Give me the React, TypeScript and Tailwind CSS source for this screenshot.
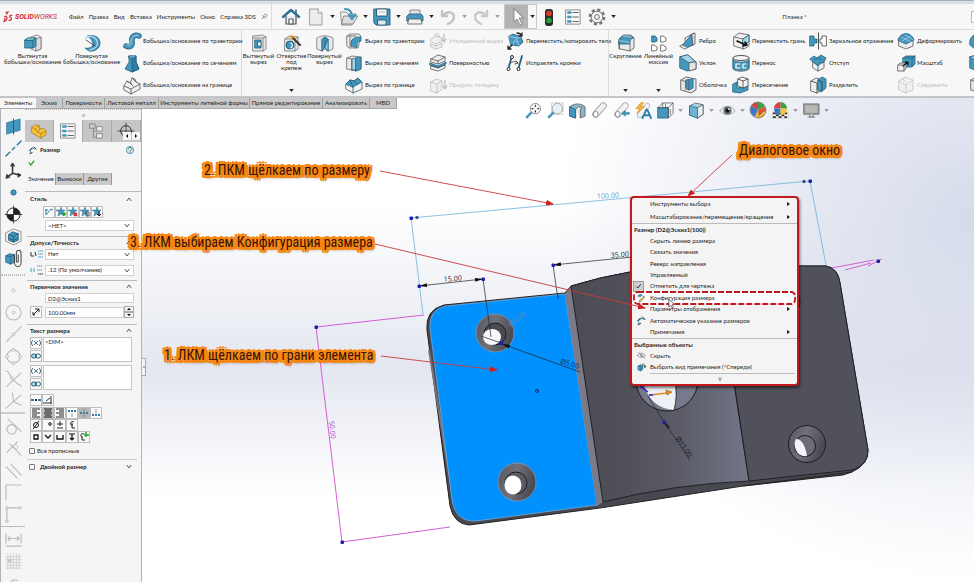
import React from 'react';

const B = '#4598bd';
const L = '#a9d5e8';
const D = '#35444e';
const G = '#dcdcdc';

const p = (d: string, fill = 'none', stroke = D, w = 0.8) => (
    <path d={d} fill={fill} stroke={stroke} strokeWidth={w} strokeLinejoin="round" strokeLinecap="round" />
);

const icons: Record<string, React.ReactNode> = {
    extrude: <>{p('M7 3l6-2 4 2v12l-5 2-5-2z', '#f4f4f4', '#777')}{p('M12 5l5-2v12l-5 2z', G, '#777')}{p('M1 6l3-2h8v8l-3 2H1z', B, '#1f5f80')}{p('M1 6h8v8M9 6l3-2', 'none', '#1f5f80')}{p('M1 6l3-2h8L9 6z', L, '#1f5f80')}</>,
    revolve: <>{p('M5 2c7-2 12 2 12 7s-5 9-11 8l-4-3c4 1 8-1 8-4S8 5 5 2z', B, '#1f5f80')}{p('M3 4c3-3 9-2 11 3s-3 8-7 9', 'none', L, 1.4)}{p('M3 6l9 6', 'none', '#333')}</>,
    sweep: <>{p('M3 14c5 2 7-1 6-5s3-7 7-5', 'none', '#1f5f80', 5.4)}{p('M3 14c5 2 7-1 6-5s3-7 7-5', 'none', B, 4)}{p('M4 13c4 1 4-1 4-4s3-6 7-6', 'none', L, 1)}</>,
    loft: <>{p('M6 2h7v6l3 7-7 3-7-3 4-7z', B, '#1f5f80')}{p('M6 2h7l-2 2H7z', L, '#1f5f80')}{p('M9 4v14l7-3-3-7V2', '#2e7da3', '#1f5f80')}</>,
    boundary: <>{p('M1 10l3-5 3 2 2-5 3 1 1 3 4 2v5l-9 5-7-4z', '#efefef', '#555')}{p('M1 10l7 3 9-5M8 13v5M4 5l5 3M9 2l3 3 1 1M7 7l3 3', 'none', '#555')}</>,
    cut: <>{p('M3 2l10-1 3 2v12l-3 2H3z', '#e9e9e9', '#777')}{p('M3 4h10v13M13 4l3-1', 'none', '#777')}{p('M5 6h6v8H5z', B, '#1f5f80')}{p('M8 8h3v4H8z', '#fff', '#1f5f80')}</>,
    hole: <>{p('M2 5l4-3 9 1v12l-3 2H2z', '#e9e9e9', '#777')}{p('M2 5h10v12M12 5l3-2', 'none', '#777')}<circle cx="7" cy="11" r="4" fill={B} stroke="#1f5f80" />{p('M8 9a3 3 0 0 1 0 5', 'none', '#fff', 1.2)}{p('M9 3l8 8', 'none', '#333', 2)}{p('M9 1v5M6 3h6', 'none', '#f0a020', 1.2)}</>,
    revcut: <>{p('M1 4c4-3 11-3 16 0v11l-5 2-3-2-3 2-5-2z', '#e9e9e9', '#777')}{p('M6 5l3-2 3 2v12l-3-4-3 4z', B, '#1f5f80')}{p('M9 3v10', 'none', '#1f5f80')}{p('M9 13l3-8v12z', L, '#1f5f80')}</>,
    sweepcut: <>{p('M2 4l3-2h9l2 2-3 12H4l-2-2z', '#e9e9e9', '#666')}{p('M6 14c-1-7 3-9 10-9v4c-4 0-4 2-4 6z', B, '#1f5f80')}{p('M2 4h9M5 4v11', 'none', '#666')}</>,
    loftcut: <>{p('M2 4l5-2 9 1v12l-5 2-9-2z', '#e9e9e9', '#666')}{p('M7 5l4-1v12H7z', L, '#1f5f80')}{p('M11 4l5-1v12l-5 2z', B, '#1f5f80')}{p('M2 4l5 1v11', 'none', '#666')}</>,
    boundcut: <>{p('M1 8l4-4 4 1 4-3 4 4v7l-9 4-7-4z', '#f3f3f3', '#555')}{p('M1 8l4-4 4 1 4-3 4 4-9 5z', B, '#1f5f80')}{p('M5 4l3 7M9 5l3 3M8 11v6', 'none', '#1f5f80')}</>,
    thick: <>{p('M2 7l5-3 6 2v3l-6 3-5-2zM2 12l5 2 6-3v4l-6 2-5-2zM7 12v2M5 4c1-4 6-3 5 1', '#efefef', '#bbb')}{p('M15 2v7M13 7l2 3 2-3', 'none', '#bbb', 1.2)}</>,
    surfcut: <>{p('M2 5l7-4 7 2v4L9 10 2 8z', '#eee', '#555')}{p('M1 9l8 3 8-4v2l-8 4-8-3z', B, '#1f5f80')}{p('M2 12l7 2 7-3v3l-7 3-7-2zM2 5l7 2 7-4M9 7v3', 'none', '#555')}</>,
    thicken: <>{p('M2 6l5-3 6 2v8l-5 4-6-2zM2 6l6 2 5-3M8 8v9', '#efefef', '#bbb')}{p('M16 4v8M14 10l2 3 2-3', 'none', '#bbb', 1.2)}</>,
    move: <>{p('M3 4l4-2 8 3 2 5-4 4-8-1z', B, '#1f5f80')}{p('M3 4l7 2 5-1M10 6l3 8M7 13l1-4 4 1', 'none', L)}{p('M2 17l4-4M2 14v3h3M11 1c3 0 4 1 5 3M16 1v3h-3', 'none', '#222', 1.3)}</>,
    heal: <>{p('M6 2L2 16M16 2l-4 14', 'none', B, 2)}{p('M6 2L2 16M16 2l-4 14M5 9c2-2 5-2 7 0M10 7l2 2-3 1', 'none', '#333', 0.8)}<circle cx="6" cy="3" r="1.5" fill="#fff" stroke="#333" /><circle cx="2.500" cy="15" r="1.500" fill="#fff" stroke="#333" /><circle cx="12.500" cy="15" r="1.500" fill="#fff" stroke="#333" /></>,
    fillet: <>{p('M2 5l4-4h8l3 3v10l-4 3-10-2z', '#eaeaea', '#555')}{p('M2 7l3-5h8l4 2c-3 0-4 2-4 6H2z', B, '#1f5f80')}{p('M2 7c5 0 6 0 11 2M5 2l9 1', 'none', L)}{p('M13 10v7M2 7v8', 'none', '#555')}</>,
    pattern: <>{p('M2 2h3l2 2v3L5 8H2z', B, '#1f5f80')}{p('M11 2h2l3 2v3l-3 1h-2zM2 11h2l3 2v3l-3 1H2zM11 11h2l3 2v3l-3 1h-2z', '#fff', '#555')}</>,
    rib: <>{p('M1 14l5-3V6l9-5v11l-9 5z', '#e6e6e6', '#555')}{p('M4 13L13 2l1 11-5 2z', B, '#1f5f80')}{p('M13 2l3-1v11l-2 1z', '#ddd', '#555')}</>,
    draft: <>{p('M1 3l8-2 8 7v7l-9 2-7-3z', B, '#1f5f80')}{p('M1 3l9 6 7-1L9 1z', L, '#1f5f80')}{p('M10 9v8l7-2V8z', '#e5e5e5', '#555')}</>,
    shell: <>{p('M2 4l5-3 10 2v11l-5 3-10-3z', '#e3e3e3', '#555')}{p('M7 4l7-1v9l-4 2-3-2z', B, '#1f5f80')}{p('M2 4l5 2v8M10 5v9', 'none', '#555')}</>,
    moveface: <>{p('M2 5l5-4 10 2v11l-5 3-10-3z', '#f0f0f0', '#555')}{p('M2 5l9 2 6-4M11 7v10', 'none', '#555')}{p('M11 7l6-4v7l-6 3z', L, '#1f5f80')}{p('M5 9l9 4M11 14l4-1-2-3', 'none', '#111', 1.6)}</>,
    wrap: <>{p('M1 4v11c3 3 13 3 16 0V4', '#eaeaea', '#555')}{p('M1 6v8c3 3 13 3 16 0V6c-4 3-12 3-16 0z', B, '#1f5f80')}<ellipse cx="9" cy="4" rx="8" ry="2.500" fill="#f6f6f6" stroke="#555" />{p('M8 10H4v4h4M14 10h-3v4h3', 'none', '#fff', 1.2)}</>,
    intersect: <>{p('M1 8l4-2v6l7-1 4-2v5l-8 3-7-1z', B, '#1f5f80')}{p('M6 3l4-2 6 2v7l-5 2-5-2zM6 3l5 2 5-2M11 5v7', '#f4f4f4', '#444')}</>,
    mirror: <>{p('M1 4h4v3h3v4H5v3H1z', B, '#1f5f80')}{p('M17 4h-4v3h-2v4h2v3h4z', '#fff', '#444')}{p('M9.500 1v16', 'none', '#222')}</>,
    offset: <>{p('M4 8l5 3 6-3v6l-6 3-5-3z', '#f1f1f1', '#555')}{p('M1 5l4-3 3 2 4-3 5 3-2 4-4 1-2 3-5-4z', B, '#1f5f80')}{p('M5 6l4-2 4 2M9 11v6', 'none', '#1f5f80')}</>,
    split: <>{p('M2 5l5-3 4 1v12l-3 2-6-2z', '#eee', '#555')}{p('M9 4l4-3 4 2v9l-5 4-3-2z', B, '#1f5f80')}{p('M2 5l6 2v10M9 4l4 2v9', 'none', '#333')}</>,
    deform: <>{p('M2 8l7 3 7-3v6l-7 3-7-3z', '#eee', '#555')}{p('M1 8c2-8 13-9 16 0l-8 4z', B, '#1f5f80')}{p('M4 5l10 5M8 3l8 5M14 4L5 9M9 12v5', 'none', L, 0.7)}</>,
    scale: <>{p('M6 4l3-2h9v8l-3 3H6z', B, '#1f5f80')}{p('M6 4h9v8M15 4l3-2', 'none', '#1f5f80')}{p('M1 11l2-2h6v5l-2 3H1zM1 11h6v6M7 11l2-2', '#eee', '#555')}{p('M6 12l5-4M8 8h3v3', 'none', '#111', 1.2)}</>,
    combine: <>{p('M2 5l6-4 8 3v10l-7 3-7-3zM2 5l7 4 7-5M9 9v8M5 3l5 4', '#efefef', '#c4c4c4')}</>,
    extra: <>{p('M1 8c2-6 8-8 14-4v9l-9 4-5-4z', B, '#1f5f80')}</>,
    // quick access
    home: <>{p('M4 8v8h10V8', '#eee', '#555', 1.2)}{p('M7 16v-5h4v5z', '#fff', '#555', 1.2)}{p('M1 9l8-7 8 7', 'none', '#2f6f90', 2.4)}{p('M14 5V2', 'none', '#2f6f90', 1.6)}</>,
    page: <>{p('M3 1h8l4 4v12H3z', '#ececec', '#8a8a8a')}{p('M11 1v4h4', '#fff', '#8a8a8a')}</>,
    open: <>{p('M1 4h5l2 2h8v3l-4 8H2z', '#f1f1f1', '#777')}{p('M4 8h14l-5 8H2z', '#dedede', '#777')}{p('M5 1c5 0 7 3 7 8M9 7l3 4 3-4', 'none', B, 2.2)}</>,
    save: <>{p('M1 1h16v16H3l-2-2z', B, '#1f4f68')}{p('M4 1h10v7H4z', '#f6f6f6', '#1f4f68')}{p('M5 12h8v5H5z', '#dfe9ee', '#1f4f68')}{p('M6 4h6', 'none', '#aaa')}</>,
    print: <>{p('M4 7V2h10v5', '#e2e2e2', '#777')}{p('M1 8l2-2h12l2 2v5H1z', B, '#2a5a72')}{p('M3 11h12l1 5H2z', '#f0f0f0', '#555')}</>,
    undo: <>{p('M3 3v5h5', 'none', '#c3c3c3', 2.4)}{p('M4 7c7-6 13-1 10 5-1 2-3 3-5 4', 'none', '#c3c3c3', 2.4)}</>,
    redo: <>{p('M15 3v5h-5', 'none', '#c9c9c9', 2.4)}{p('M14 7C7 1 1 6 4 12c1 2 3 3 5 4', 'none', '#c9c9c9', 2.4)}</>,
    cursor: <>{p('M6 1v13l3-3 3 6 2-1-3-6h4z', '#fff', '#777')}</>,
    light: <><rect x="5" y="1" width="8" height="17" rx="3" fill="#2a2a2a" /><circle cx="9" cy="5.500" r="2.800" fill="#e03a24" /><circle cx="9" cy="12.500" r="2.800" fill="#25a23a" /></>,
    list: <>{p('M1 1h16v16H1z', '#f7f7f7', '#6a6a6a')}{p('M3 3h4v2H3zM3 8h4v2H3zM3 13h4v2H3z', B, B, 0.8)}{p('M9 4h6M9 9h6M9 14h6', 'none', '#666', 1.2)}</>,
    gear: <><circle cx="9" cy="9" r="7.200" fill="none" stroke="#777" strokeWidth="2.400" strokeDasharray="3.200 2.450" /><circle cx="9" cy="9" r="5.800" fill="#f5f5f5" stroke="#777" /><circle cx="9" cy="9" r="2.400" fill="none" stroke="#777" /></>,
    // heads-up
    zoomfit: <>{p('M2 16l5-5', 'none', B, 2.6)}<circle cx="11" cy="7" r="5.500" fill="#f4f8fa" stroke="#888" />{p('M11 3.500v1M11 9.500v1M7.500 7h1M13.500 7h1', 'none', '#333', 1.4)}</>,
    zoomarea: <>{p('M2 16l5-5', 'none', B, 2.6)}<circle cx="11" cy="7" r="5.500" fill="#e8f0f4" stroke="#aaa" /><path d="M5 1h12v12H5z" fill="none" stroke="#888" strokeWidth="0.700" strokeDasharray="1.500 1" /></>,
    section: <>{p('M1 5c4-4 12-4 16 0v10l-5 2V8H7v9l-6-2z', '#8fb6c8', '#555')}{p('M7 8l3-3 4 1-2 2v8', '#e8eef1', '#555')}{p('M1 5l6 3v9l-6-2z', B, '#1f5f80')}</>,
    tube: <>{p('M5 13L13 4', 'none', '#888', 7)}{p('M5 13L13 4', 'none', '#f0f0f0', 5.6)}<ellipse cx="5" cy="13" rx="2.600" ry="3.200" fill="#fff" stroke="#888" /></>,
    tubeback: <>{p('M5 13L13 4', 'none', '#999', 7)}{p('M5 13L13 4', 'none', '#f2f2f2', 5.600)}<ellipse cx="5" cy="13" rx="2.600" ry="3" fill="#fff" stroke="#888" />{p('M17 13h-4v2l-4-3 4-3v2h4z', B, '#1f5f80', 0.5)}</>,
    bolt: <>{p('M5 14l8-10', 'none', '#aaa', 6)}{p('M5 14l8-10', 'none', '#f2f2f2', 4.600)}{p('M6 1L1 7h4l-3 5 8-7H6l3-4z', '#f6b73c', '#c87d10', 0.6)}{p('M8 17l4-9h1l4 9M10 14h6', 'none', '#2f7fa6', 2)}</>,
    views: <>{p('M1 6h11v11H1z', B, '#1f5f80')}{p('M1 6l5-5h11v11l-5 5V6zM12 6l5-5M6 1v4M9 2v5M14 8v5', 'none', '#555')}</>,
    cube: <>{p('M2 4l6-3 8 2v10l-6 4-8-3z', L, '#555')}{p('M10 6l6-3v10l-6 4z', '#e5edf1', '#555')}{p('M2 4l8 2v11l-8-3z', '#6cb4d4', '#2a6f90')}</>,
    eye: <>{p('M1 9c4-6 12-6 16 0-4 6-12 6-16 0z', '#ececec', '#999')}<circle cx="9" cy="9" r="4.200" fill="#5c6a72" /><circle cx="9" cy="9" r="2" fill="#111" /><circle cx="10.500" cy="7.500" r="1" fill="#fff" /></>,
    ball: <><path d="M9 9V1a8 8 0 0 1 7 5z" fill="#3aa04a" /><path d="M9 9L2 5a8 8 0 0 1 7-4z" fill="#d9453c" /><path d="M9 9L2 5a8 8 0 0 0 4 11z" fill="#3b78c4" /><path d="M9 9l7-3a8 8 0 0 1-5 11l-5-1z" fill="#e8b93a" /><path d="M9 9l1 8a8 8 0 0 0 6-11z" fill="#d9533c" /><circle cx="9" cy="9" r="8" fill="none" stroke="#666" strokeWidth="0.600" />{p('M9 16l6-6 2 2-6 5z', '#f3c04d', '#8a6a20', 0.5)}</>,
    scene: <>{p('M1 11h16v6H1z', '#fff', '#999', 0.4)}<path d="M1 11h3v2H1zM7 11h3v2H7zM13 11h3v2h-3zM4 13h3v2H4zM10 13h3v2h-3zM1 15h3v2H1zM7 15h3v2H7zM13 15h3v2h-3z" fill="#333" /><path d="M9 7V0a7 7 0 0 1 7 7z" fill="#3aa04a" /><path d="M9 7H2a7 7 0 0 1 7-7z" fill="#d9453c" /><path d="M9 7H2a7 7 0 0 0 7 7z" fill="#3b78c4" /><path d="M9 7h7a7 7 0 0 1-7 7z" fill="#efc53a" /></>,
    monitor: <>{p('M1 2h16v11H1z', '#9a9a9a', '#666')}{p('M3 4h12v7H3z', '#b9b9b9', '#b9b9b9')}{p('M7 13v3h4v-3M5 16h8', '#ccc', '#777')}</>,
    // left sketch toolbar
    plane: <>{p('M2 5l14-4v12L2 17z', B, '#2a7aa0')}{p('M9 1v16', 'none', '#1f5f80', 1)}</>,
    axis: <>{p('M1 17L17 1', 'none', '#2f6f90', 1.400)}{p('M6 12l1-1M11 7l1-1', 'none', '#f5f5f5', 2)}</>,
    coord: <>{p('M8 2v10l8 2M8 12l-6 4', 'none', '#333', 1.600)}{p('M6 4l2-3 2 3zM14 12l3 2-3 2zM1 17l1-4 3 3z', '#333', '#333', 0.8)}</>,
    point: <circle cx="9" cy="9" r="2.800" fill={B} stroke="#2f6f90" />,
    mass: <><circle cx="9" cy="9" r="7" fill="#fff" stroke="#222" /><path d="M9 9V2a7 7 0 0 1 7 7zM9 9v7a7 7 0 0 1-7-7z" fill="#222" />{p('M9 0v18M0 9h18', 'none', '#222')}</>,
    bbox: <>{p('M1 5l8-4 8 3v10l-8 4-8-4z', '#f2f2f2', '#666', 0.7)}{p('M4 7l4-3 6 2v7l-5 2-5-2z', B, '#1f4f68')}{p('M4 7l5 2 5-3M9 9v6M4 11l5 2 5-2', 'none', '#1f4f68')}</>,
    mate: <>{p('M1 6l4-2 5 1v8l-4 2-5-2z', B, '#1f5f80')}{p('M1 6l5 1 4-2M6 7v8', 'none', '#1f5f80')}{p('M10 5v8a3 4 0 0 0 7 0V4a2 3 0 0 0-5 0v8a1 1 0 0 0 2 0V5', 'none', '#444', 1.1)}</>,
    dot: <circle cx="9" cy="9" r="1.800" fill="none" stroke="#bbb" />,
    circle: <><circle cx="9" cy="9" r="8" fill="none" stroke="#bbb" strokeWidth="1.200" /><circle cx="9" cy="9" r="1.500" fill="none" stroke="#bbb" /></>,
    line: <>{p('M1 17L17 1', 'none', '#bbb', 1.200)}<circle cx="9" cy="9" r="1.500" fill="#eee" stroke="#bbb" /></>,
    quad: <><circle cx="9" cy="9" r="7" fill="none" stroke="#bbb" strokeWidth="1.200" /><circle cx="9" cy="2" r="1.600" fill="#f5f5f5" stroke="#bbb" /><circle cx="9" cy="16" r="1.600" fill="#f5f5f5" stroke="#bbb" /><circle cx="2" cy="9" r="1.600" fill="#f5f5f5" stroke="#bbb" /><circle cx="16" cy="9" r="1.600" fill="#f5f5f5" stroke="#bbb" /></>,
    cross: <>{p('M1 1c2 0 3 1 4 4 2 5 6 8 12 12M17 3L2 17', 'none', '#bbb', 1.200)}<circle cx="7" cy="8" r="1.400" fill="#eee" stroke="#bbb" /></>,
    branch: <>{p('M1 17L17 3M8 1l1 9 8 4', 'none', '#bbb', 1.200)}</>,
    tangent: <><circle cx="7" cy="12" r="5" fill="none" stroke="#bbb" strokeWidth="1.200" />{p('M3 1l14 13', 'none', '#bbb', 1.200)}</>,
    perp: <>{p('M2 13L13 2M5 4l12 12', 'none', '#bbb', 1.200)}{p('M9 6l2-2 3 3-2 3z', 'none', '#bbb')}</>,
    parallel: p('M1 5l12 12M6 2l11 12', 'none', '#bbb', 1.200),
    corner: p('M1 17V1h16', 'none', '#bbb', 1.200),
    ends: <>{p('M2 15V2h13', 'none', '#bbb', 1.200)}<circle cx="2" cy="2" r="1.400" fill="#eee" stroke="#bbb" /><circle cx="16" cy="2" r="1.400" fill="#eee" stroke="#bbb" /><circle cx="2" cy="16" r="1.400" fill="#eee" stroke="#bbb" /></>,
    width: p('M1 3v10M17 3v10M3 8h12M5 6L3 8l2 2M13 6l2 2-2 2M1 16h16', 'none', '#bbb', 1.200),
    grid: <>{p('M1 4h16M1 7h16M1 10h16M1 13h16M1 16h16M3 1v16M6 1v16M9 1v16M12 1v16M15 1v16', 'none', '#c6c6c6', 0.7)}<circle cx="5" cy="8" r="2" fill="#c8c8c8" /></>,
    diag: p('M4 10l5-5M9 5l4 1', 'none', '#bbb', 1.2),
    // property manager
    part: <>{p('M1 5l4-3 4 1 1 4 4-1 3 3v4l-6 4-10-6z', '#f3c13c', '#a87710')}{p('M1 5l4 2 2 3 4 2 6-3M11 12v5M5 7l4-4M7 10l3-3', 'none', '#a87710')}</>,
    config: <>{p('M5 6v10h3M5 9h3M1 1h6v5H1z', 'none', '#777')}{p('M9 4h6v5H9zM9 12h6v5H9z', '#eee', '#777')}</>,
    target: <><circle cx="9" cy="9" r="6" fill="none" stroke="#222" />{p('M9 0v18M0 9h18', 'none', '#222')}</>,
    dimension: <>{p('M4 16C1 9 5 3 15 6', 'none', B, 2.200)}{p('M1 10l6-6M2 17l5-2M11 2l5 5', 'none', '#222', 2)}</>,
    pencil: <>{p('M1 6l5-4 5 2-5 4z', B, '#1f5f80')}{p('M5 15l8-9 3 2-8 9-4 1z', '#f3c04d', '#333')}</>,
    hide: <>{p('M1 9c4-6 12-6 16 0-4 5-12 5-16 0zM3 3l13 12', 'none', '#555', 1)}<circle cx="9" cy="9" r="2.500" fill="#888" /></>,
    note: <>{p('M2 6l5-3 5 2v8l-5 3-5-2z', B, '#1f4f68')}{p('M2 6l5 2 5-3M7 8v8', 'none', '#1f4f68')}{p('M11 2c4 0 5 2 5 6M14 6l2 3 2-3', 'none', '#222', 1.400)}</>,
};

const Icon = ({ name, className = 'size-[18px]' }: { name: string; className?: string }) => (
    <svg viewBox="0 0 18 18" className={`shrink-0 overflow-visible ${className}`} aria-hidden="true">{icons[name]}</svg>
);

const Caret = ({ color = '#222' }: { color?: string }) => (
    <svg viewBox="0 0 6 4" className="w-[5px] h-[3px] shrink-0" aria-hidden="true"><path d="M0 0h6L3 4z" fill={color} /></svg>
);

const Chevron = ({ up = false }: { up?: boolean }) => (
    <svg viewBox="0 0 8 6" className="w-[6px] h-[5px] shrink-0" aria-hidden="true">
        <path d={up ? 'M1 5l3-4 3 4' : 'M1 1l3 4 3-4'} fill="none" stroke="#555" strokeWidth="1.300" />
    </svg>
);

const Large = ({ icon, lines, arrow, className }: { icon: string; lines: string[]; arrow?: boolean; className: string }) => (
    <button className={`flex flex-col items-center shrink-0 pt-1 pb-1 ${className}`}>
        <Icon name={icon} />
        <span className="mt-[1px] flex flex-col items-center whitespace-nowrap leading-[6px]">
            {lines.map((l) => <span key={l}>{l}</span>)}
        </span>
        {arrow && <span className="mt-auto"><Caret /></span>}
    </button>
);

const Column = ({ items, className }: { items: [string, string, boolean?][]; className: string }) => (
    <div className={`flex flex-col shrink-0 ${className}`}>
        {items.map(([icon, label, off]) => (
            <button key={icon} disabled={off} className={`flex h-[22px] items-center gap-[2px] whitespace-nowrap ${off ? 'text-[#bdbdbd]' : ''}`}>
                <Icon name={icon} />
                {label}
            </button>
        ))}
    </div>
);

const Split = ({ icon, grey }: { icon: string; grey?: boolean }) => (
    <div className="flex items-center">
        <button aria-label={icon} className="flex w-6 justify-center"><Icon name={icon} /></button>
        <button aria-label={`${icon} menu`} className="flex w-[9px] justify-center"><Caret color={grey ? '#999' : '#222'} /></button>
    </div>
);

const TopBar = () => (
    <div className="flex h-[26px] shrink-0 items-center border-b border-[#dcdcdc] bg-[#f7f7f7]">
        <a href="#" className='flex w-[66px] shrink-0 items-center gap-[2px] pl-[3px] font-["Roboto",sans-serif] text-[7px] font-bold italic text-[#d22630]'>
            <svg viewBox="0 0 18 18" className="size-[10px] overflow-visible" aria-hidden="true">
                <path d="M4 1l5-1-3 5M2 8c7-2 7 6 0 9l2-7M17 6c-6-1-6 3-3 4s1 6-4 5" fill="none" stroke="#d22630" strokeWidth="2" />
            </svg>
            <span>SOLID<span className="font-normal">WORKS</span></span>
        </a>
        <nav className="flex w-[206px] shrink-0 items-center justify-between whitespace-nowrap border-r border-[#dcdcdc] self-stretch pl-[3px] pr-[3px]">
            {['Файл', 'Правка', 'Вид', 'Вставка', 'Инструменты', 'Окно', 'Справка 3DS'].map((m) => <button key={m}>{m}</button>)}
            <svg viewBox="0 0 8 8" className="size-[7px]" aria-hidden="true"><path d="M1 7l3-3M2 3l3 3M3 3l2-2 2 2-2 2" fill="none" stroke="#777" /></svg>
        </nav>
        <div className="flex shrink-0 items-center self-stretch">
            <button aria-label="home" className="flex w-8 justify-center pl-[6px]"><Icon name="home" /></button>
            <Split icon="page" />
            <Split icon="open" />
            <Split icon="save" />
            <Split icon="print" />
            <Split icon="undo" grey />
            <Split icon="redo" grey />
            <div className="ml-[2px] flex items-stretch self-stretch border border-[#c8c8c8]">
                <button aria-label="select" className="flex w-[23px] items-center justify-center bg-[#b3b3b3]"><Icon name="cursor" /></button>
                <button aria-label="select menu" className="flex w-2 items-center justify-center"><Caret /></button>
            </div>
            <button aria-label="rebuild" className="flex w-6 justify-center"><Icon name="light" /></button>
            <button aria-label="options list" className="flex w-6 justify-center"><Icon name="list" className="size-[16px]" /></button>
            <Split icon="gear" />
        </div>
        <h1 className="flex-1 pl-[62px] text-center">Планка *</h1>
        <input aria-label="Поиск" className="w-[100px] -mr-[97px] ml-[62px] h-3 border border-[#bbb] bg-white" />
    </div>
);

const Ribbon = () => (
    <div className="flex h-[68px] shrink-0 overflow-hidden border-b-2 border-[#c4c4c8] bg-[#f7f7f7]">
        <div className="flex shrink-0 border-r border-[#dcdcdc] pl-[3px]">
            <Large icon="extrude" lines={['Вытянутая', 'бобышка/основание']} className="w-[59px]" />
            <Large icon="revolve" lines={['Повернутая', 'бобышка/основание']} className="w-[59px]" />
            <Column className="w-[120px] pl-[2px]" items={[['sweep', 'Бобышка/основание по траектории'], ['loft', 'Бобышка/основание по сечениям'], ['boundary', 'Бобышка/основание на границе']]} />
        </div>
        <div className="flex shrink-0 border-r border-[#dcdcdc]">
            <Large icon="cut" lines={['Вытянутый', 'вырез']} className="w-[33px]" />
            <Large icon="hole" lines={['Отверстие', 'под', 'крепеж']} arrow className="w-[33px]" />
            <Large icon="revcut" lines={['Повернутый', 'вырез']} className="w-[33px]" />
            <Column className="w-[88px] pl-[4px]" items={[['sweepcut', 'Вырез по траектории'], ['loftcut', 'Вырез по сечениям'], ['boundcut', 'Вырез по границе']]} />
            <Column className="w-[77px]" items={[['thick', 'Утолщенный вырез', true], ['surfcut', 'Поверхностью'], ['thicken', 'Придать толщину', true]]} />
            <Column className="w-[102px]" items={[['move', 'Переместить/копировать тела'], ['heal', 'Исправлять кромки']]} />
        </div>
        <div className="flex">
            <Large icon="fillet" lines={['Скругление']} arrow className="w-[33px]" />
            <Large icon="pattern" lines={['Линейный', 'массив']} arrow className="w-[33px]" />
            <Column className="w-[57px] pl-[4px]" items={[['rib', 'Ребро'], ['draft', 'Уклон'], ['shell', 'Оболочка']]} />
            <Column className="w-[77px]" items={[['moveface', 'Переместить грань'], ['wrap', 'Перенос'], ['intersect', 'Пересечение']]} />
            <Column className="w-[88px]" items={[['mirror', 'Зеркальное отражение'], ['offset', 'Отступ'], ['split', 'Разделить']]} />
            <Column className="w-[72px]" items={[['deform', 'Деформировать'], ['scale', 'Масштаб'], ['combine', 'Соединить', true]]} />
            <Column className="w-[24px]" items={[['extra', ''], ['draft', ''], ['shell', '']]} />
        </div>
    </div>
);

const tabs: [string, string][] = [
    ['Элементы', 'w-[36px]'],
    ['Эскиз', 'w-[27px]'],
    ['Поверхности', 'w-[42px]'],
    ['Листовой металл', 'w-[54px]'],
    ['Инструменты литейной формы', 'w-[91px]'],
    ['Прямое редактирование', 'w-[73px]'],
    ['Анализировать', 'w-[47px]'],
    ['MBD', 'w-[27px]'],
];

const RibbonTabs = () => (
    <div role="tablist" className="z-10 col-span-2 col-start-1 row-start-1 flex justify-self-start border-b border-[#a8a8a8] bg-[#c9c9c9]">
        {tabs.map(([t, w], i) => (
            <button key={t} role="tab" className={`${w} whitespace-nowrap text-center leading-[10px] ${i ? 'border-r border-[#a0a0a0]' : 'bg-[#f7f7f7]'}`}>{t}</button>
        ))}
    </div>
);

const Tools = ({ names }: { names: string[] }) => (
    <>
        {names.map((n) => (
            <button key={n} aria-label={n} className="flex h-[22px] shrink-0 items-center justify-center"><Icon name={n} className="size-[17px]" /></button>
        ))}
    </>
);

const SketchBar = () => (
    <div className="flex w-[25px] shrink-0 flex-col overflow-hidden border-l border-[#a9b4bc] pt-[6px]">
        <Tools names={['plane', 'axis', 'coord', 'point', 'mass', 'bbox', 'mate']} />
        <div className="mt-[5px] mb-[3px] h-[2px] shrink-0 border-y border-dotted border-[#bbb]" />
        <Tools names={['dot', 'circle', 'line', 'quad', 'cross', 'branch']} />
        <div className="my-px h-[2px] shrink-0 bg-[#ccc]" />
        <Tools names={['tangent', 'perp', 'parallel', 'corner', 'ends']} />
        <div className="my-px h-px shrink-0 bg-[#bbb]" />
        <Tools names={['width', 'grid', 'diag']} />
    </div>
);

const Heading = ({ children, className = '' }: { children: string; className?: string }) => (
    <div className={`flex h-3 shrink-0 items-center justify-between border-t border-[#bbb] pl-[3px] pr-[5px] ${className}`}>
        <h3 className="font-bold">{children}</h3>
        <Chevron up />
    </div>
);

const Drop = ({ label, value }: { label: string; value: string }) => (
    <div className="flex h-[11px] flex-1 items-center border border-[#d0d0d0] bg-white pr-[3px]">
        <select aria-label={label} className="h-full flex-1 appearance-none pl-[2px] outline-none">
            <option>{value}</option>
        </select>
        <Chevron />
    </div>
);

const Cell = ({ label, on, children }: { label: string; on?: boolean; children: React.ReactNode }) => (
    <button aria-label={label} className={`flex h-3 w-3 shrink-0 items-center justify-center border border-[#bdbdbd] ${on ? 'bg-[#b5b5b5]' : 'bg-[#fafafa]'}`}>
        <svg viewBox="0 0 10 10" className="size-[10px]" aria-hidden="true">{children}</svg>
    </button>
);

const s = (d: string, stroke = '#222', w = 1) => <path d={d} fill="none" stroke={stroke} strokeWidth={w} />;
const starAt = (extra: React.ReactNode) => <><path d="M5 0l1 3h3L7 5l1 4-3-2-3 2 1-4-3-2h4z" fill={B} stroke="#2a6f90" strokeWidth="0.500" />{extra}</>;
const link = <>{s('M2 2C0 4 0 6 2 8M8 2c2 2 2 4 0 6', '#444')}{s('M3 3l4 4M7 3L3 7', '#2f7fa6')}</>;
const chain = <><rect x="0.500" y="3" width="5" height="4" rx="2" fill={L} stroke="#2a5f7a" /><rect x="4.500" y="3" width="5" height="4" rx="2" fill="none" stroke="#2a5f7a" /></>;

const TextBlock = ({ label, value }: { label: string; value: string }) => (
    <div className="flex h-[25px] pl-[3px]">
        <div className="flex flex-col justify-between">
            <Cell label="link value">{link}</Cell>
            <Cell label="chain">{chain}</Cell>
        </div>
        <textarea aria-label={label} defaultValue={value} className="ml-px mr-[5px] flex-1 resize-none border border-[#c4c4c4] bg-white pl-[1px] leading-[7px] outline-none" />
    </div>
);

const PropertyPanel = () => (
    <div className="flex min-w-0 flex-1 flex-col overflow-hidden">
        <div className="flex h-[11px] shrink-0 items-center justify-center border-t border-dotted border-[#bbb]"><span className="size-[3px] rounded-full border border-[#999]" /></div>
        <div className="flex h-[22px] shrink-0 bg-[#c6c6c6]">
            {['part', 'list', 'config', 'target'].map((n, i) => (
                <button key={n} aria-label={n} className={`relative flex flex-1 items-center justify-center border-r border-[#a9a9a9] ${i === 1 ? 'bg-[#f7f7f7]' : ''}`}>
                    <Icon name={n} className="size-[16px]" />
                    {i === 3 && (
                        <span className="absolute right-0 bottom-[2px] flex gap-px">
                            <svg viewBox="0 0 8 8" className="size-[8px] bg-[#f5f5f5]"><path d="M5 2v4L3 4z" /></svg>
                            <svg viewBox="0 0 8 8" className="size-[8px] bg-[#f5f5f5]"><path d="M3 2v4l2-2z" /></svg>
                        </span>
                    )}
                </button>
            ))}
        </div>
        <div className="flex h-[15px] shrink-0 items-center gap-[3px] pl-[4px] pr-[7px]">
            <Icon name="dimension" className="size-[8px]" />
            <h2 className="flex-1 font-bold">Размер</h2>
            <svg viewBox="0 0 10 10" className="size-[8px]"><circle cx="5" cy="5" r="4.500" fill="#dcebf3" stroke="#4a7f9c" /><path d="M3 4c0-3 4-3 4 0 0 1-2 1-2 3M5 8v1" fill="none" stroke="#2a5f7a" /></svg>
        </div>
        <button aria-label="OK" className="flex h-[10px] shrink-0 items-center pl-[3px]">
            <svg viewBox="0 0 8 8" className="size-[7px]"><path d="M1 4l2 3 4-5" fill="none" stroke="#2ca02c" strokeWidth="1.500" /></svg>
        </button>
        <div role="tablist" className="mt-[6px] flex h-3 shrink-0 pl-[2px]">
            {['Значение', 'Выноски', 'Другие'].map((t, i) => (
                <button key={t} role="tab" className={`border-r border-[#999] px-[1px] text-center ${i ? 'bg-[#cacaca] w-[28px]' : 'w-[29px]'}`}>{t}</button>
            ))}
        </div>
        <div className="mt-[6px] border-t border-[#bbb]" />
        <div className="flex flex-1 flex-col pl-[2px] pr-[4px]">
            <div className="mt-px flex h-3 shrink-0 items-center justify-between pl-[3px] pr-[5px]">
                <h3 className="font-bold">Стиль</h3>
                <Chevron up />
            </div>
            <div className="mt-px flex pl-[16px]">
                <Cell label="style">{s('M1 3h3M2 2v6l5-6 2 1', '#2f7fa6')}</Cell>
                <Cell label="add style">{starAt(s('M8 5v4M6 7h4', '#2a2', 1.5))}</Cell>
                <Cell label="delete style">{starAt(s('M6 6l3 3M9 6L6 9', '#d22', 1.5))}</Cell>
                <Cell label="save style">{starAt(s('M6 5h3v4H6z', '#555'))}</Cell>
                <Cell label="load style">{starAt(s('M7 4v5M5 7l2 2 2-2', '#222'))}</Cell>
            </div>
            <div className="mt-[2px] flex shrink-0 pl-[18px] pr-[3px]"><Drop label="Стиль" value="<НЕТ>" /></div>
            <Heading className="mt-[5px]">Допуск/Точность</Heading>
            <div className="flex shrink-0 items-center pl-[3px] pr-[3px]">
                <svg viewBox="0 0 14 12" className="mr-px h-3 w-[14px]"><path d="M1 4v4h3M5 4l1 4" fill="none" stroke="#333" /><path d="M8 3h5M8 6h5M8 9h5" fill="none" stroke={B} strokeDasharray="1.500 0.500" /></svg>
                <Drop label="Допуск" value="Нет" />
            </div>
            <div className="mt-[4px] flex shrink-0 items-center pl-[3px] pr-[3px]">
                <svg viewBox="0 0 14 12" className="mr-px h-3 w-[14px]"><path d="M1 4v4M4 4v4" stroke={B} /><path d="M7 2h5M7 6h5" fill="none" stroke={B} strokeDasharray="1.500 0.500" /><path d="M8 10h5" stroke="#333" strokeDasharray="1.500 0.500" /></svg>
                <Drop label="Точность" value=".12 (По умолчанию)" />
            </div>
            <Heading className="mt-[4px]">Первичное значение</Heading>
            <div className="mt-px flex shrink-0 pl-[18px] pr-[3px]">
                <input aria-label="Имя" defaultValue="D2@Эскиз1" className="h-[10px] w-full border border-[#d0d0d0] bg-white pl-[2px] outline-none" />
            </div>
            <div className="mt-[3px] flex shrink-0 items-center pl-[3px] pr-[3px]">
                <Cell label="reverse">{s('M2 8l6-6M4 2h4v3M2 5v3h2')}</Cell>
                <input aria-label="Первичное значение" defaultValue="100.00мм" className="ml-[3px] h-[11px] min-w-0 flex-1 border border-[#d0d0d0] bg-white pl-[2px] outline-none" />
                <div className="flex w-[10px] flex-col">
                    <button aria-label="up" className="flex h-[6px] items-center justify-center border border-[#aaa]"><svg viewBox="0 0 4 2" className="h-[2px] w-1"><path d="M0 2l2-2 2 2z" /></svg></button>
                    <button aria-label="down" className="flex h-[6px] items-center justify-center border border-[#aaa]"><svg viewBox="0 0 4 2" className="h-[2px] w-1"><path d="M0 0l2 2 2-2z" /></svg></button>
                </div>
            </div>
            <Heading className="mt-[6px]">Текст размера</Heading>
            <div className="mt-px"><TextBlock label="Текст размера" value="<DIM>" /></div>
            <div className="mt-[3px]"><TextBlock label="Текст размера, нижний" value="" /></div>
            <div className="mt-[4px] flex pl-[3px]">
                <Cell label="center dimension">{s('M0 5h3M7 5h3', '#2f7fa6', 2)}{s('M4 5h2', '#222', 2)}</Cell>
                <Cell label="offset text">{s('M0 8h9M8 1v8M3 6l4-3', '#333')}</Cell>
            </div>
            <div className="mt-px flex pl-[3px]">
                <Cell label="left">{s('M1 1h8M1 3h5M1 5h8M1 7h5M1 9h8')}</Cell>
                <Cell label="center" on>{s('M1 1h8M2 3h6M1 5h8M2 7h6M1 9h8')}</Cell>
                <Cell label="right">{s('M1 1h8M4 3h5M1 5h8M4 7h5M1 9h8')}</Cell>
                <Cell label="top">{s('M1 3h2M4 3h2M7 3h2', '#2f7fa6', 2)}{s('M5 5v4', '#999')}</Cell>
                <Cell label="middle" on>{s('M1 5h2M4 5h2M7 5h2', '#2f7fa6', 2)}{s('M5 1v8', '#888')}</Cell>
                <Cell label="bottom">{s('M1 7h2M4 7h2M7 7h2', '#2f7fa6', 2)}{s('M5 1v4', '#999')}</Cell>
            </div>
            <div className="flex pl-[3px]">
                <Cell label="diameter"><circle cx="5" cy="5" r="2.500" fill="none" stroke="#111" />{s('M2 9l6-8')}</Cell>
                <Cell label="degree"><circle cx="7" cy="4" r="1.300" fill="none" stroke="#111" /></Cell>
                <Cell label="plus minus">{s('M5 1v5M2 4h6M2 8h6')}</Cell>
                <Cell label="centerline">{s('M7 2C3 0 2 6 6 5M5 3v5h3')}</Cell>
            </div>
            <div className="flex pl-[3px]">
                <Cell label="square">{s('M3 3h4v4H3z', '#111', 1.3)}</Cell>
                <Cell label="countersink">{s('M2 3l3 3 3-3', '#111', 1.3)}</Cell>
                <Cell label="counterbore">{s('M2 3v4h6V3', '#111', 1.3)}</Cell>
                <Cell label="depth">{s('M2 2h6M5 2v6M3 6l2 2 2-2', '#111', 1.2)}</Cell>
                <Cell label="more">{s('M5 2C1 0 1 6 4 5M3 5v3h3')}{s('M7 0v5M5 3h5', '#2a2', 1.5)}</Cell>
            </div>
            <label className="mt-px flex h-[14px] shrink-0 items-center gap-[2px] pl-[2px]">
                <input type="checkbox" className="size-[6px] appearance-none rounded-[1px] border border-[#777] bg-white" />
                Все прописные
            </label>
            <div className="mt-px flex h-[14px] shrink-0 items-center justify-between border-t border-[#ccc] pl-[2px] pr-[5px]">
                <label className="flex items-center gap-[5px] font-bold">
                    <input type="checkbox" className="size-[6px] appearance-none rounded-[1px] border border-[#777] bg-white" />
                    Двойной размер
                </label>
                <Chevron />
            </div>
        </div>
    </div>
);

// part drawing, in window coordinates
const Model = () => (
    <svg viewBox="142 98 832 484" preserveAspectRatio="xMinYMin meet" className="absolute inset-0 h-full w-full">
        <defs>
            <linearGradient id="mid" x1="0" y1="0" x2="1" y2="0">
                <stop offset="0" stopColor="#4c4c54" />
                <stop offset="0.300" stopColor="#4f5058" />
                <stop offset="0.600" stopColor="#5a5b66" />
                <stop offset="1" stopColor="#747688" />
            </linearGradient>
            <linearGradient id="sink" x1="0" y1="0" x2="1" y2="0.300">
                <stop offset="0" stopColor="#55555d" />
                <stop offset="0.500" stopColor="#71717b" />
                <stop offset="1" stopColor="#4b4b52" />
            </linearGradient>
            <marker id="red" viewBox="0 0 8 6" refX="7" refY="3" markerWidth="8" markerHeight="6" markerUnits="userSpaceOnUse" orient="auto">
                <path d="M0 0l8 3-8 3z" fill="#cf1f1f" />
            </marker>
            <marker id="blk" viewBox="0 0 8 4" refX="8" refY="2" markerWidth="8" markerHeight="4" markerUnits="userSpaceOnUse" orient="auto-start-reverse">
                <path d="M0 0l8 2-8 2z" fill="#111" />
            </marker>
        </defs>

        <path d="M444 305L565 293 571 286Q600 277 630 272L797 266 826 266Q838 268 840 283L868 450Q869 464 852 472L843 475 743 486 600 508 469 525Q454 524 450 506L427 330Q425 310 444 305z" fill="#484950" stroke="#222" strokeWidth="1" />
        <path d="M429 350l24 148" stroke="#74747f" strokeWidth="2" />
        <path d="M446 306L565 294 597 505 476 521Q455 522 452 499L430 328Q429 309 446 306z" fill="#0091ff" stroke="#7ba7d4" strokeWidth="0.800" />
        <path d="M565 294l6-8 32 216-6 4z" fill="#7a7a88" />
        <path d="M571 286Q600 277 630 272H717L749 481Q675 484 603 502z" fill="url(#mid)" stroke="#1c1c20" strokeWidth="0.900" />
        <path d="M717 268L797 266 826 266Q838 268 840 283L868 450Q868 466 852 470L749 481z" fill="#50515b" stroke="#1c1c20" strokeWidth="0.900" />
        <path d="M743 486l109-14" fill="none" stroke="#1c1c20" strokeWidth="0.800" />

        <circle cx="667" cy="380" r="31" fill="#777a8c" stroke="#1c1c20" />
        <path d="M667 349a31 31 0 0 0 7 61q4-14 0-30z" fill="#eef0f7" />
        <path d="M674 410q4-14 1-30" fill="none" stroke="#222" strokeWidth="0.800" />
        <path d="M650 395l17-2" stroke="#d98a1c" strokeWidth="1.500" />
        <path d="M666 390l6 2-5 3z" fill="#e8941a" stroke="#7a4a08" strokeWidth="0.500" />
        <path d="M640 386l8 6M649 395h4" stroke="#2222cc" strokeWidth="1.500" />

        <circle cx="495" cy="333" r="19" fill="url(#sink)" stroke="#8797ad" strokeWidth="0.800" />
        <circle cx="495" cy="334" r="11" fill="#4a4a52" stroke="#1c1c20" />
        <ellipse cx="492" cy="337" rx="9" ry="8" fill="#f7f8fb" />
        <circle cx="517" cy="482" r="19" fill="url(#sink)" stroke="#8797ad" strokeWidth="0.800" />
        <circle cx="516" cy="483" r="11" fill="#5b5b64" stroke="#1c1c20" />
        <ellipse cx="513" cy="485" rx="8.500" ry="9.500" fill="#fff" />
        <circle cx="807" cy="444" r="18.500" fill="url(#sink)" stroke="#1c1c20" />
        <circle cx="805" cy="446" r="10.500" fill="#6b6c78" stroke="#1c1c20" />
        <path d="M796 439q8 0 11 17-8 1-11-6-3-6 0-11z" fill="#f4f5fa" />
        <path d="M797 292q6 8 0 20" fill="none" stroke="#1c1c20" />

        <g fill="none" stroke="#6fb1dc" strokeWidth="0.800">
            <path d="M411 218L810 181M411 218L423 314M810 181L826 265" />
        </g>
        <g fill="none" stroke="#222" strokeWidth="0.700">
            <path d="M419 286L483 279" markerStart="url(#blk)" markerEnd="url(#blk)" />
            <path d="M483 279L491 337" />
            <path d="M553 265L632 257" markerStart="url(#blk)" />
            <path d="M553 265l5 34" />
            <path d="M502 344L580 372" markerStart="url(#blk)" />
            <path d="M481 336l20 7" />
            <path d="M664 422L690 460M648 396l16 26" />
            <path d="M664 422l5 6" strokeWidth="2" />
        </g>
        <g fill="none" stroke="#d45fd4" strokeWidth="1">
            <path d="M316 327L424 315M316 327L342 542L450 527" />
            <path d="M832 268l42-8M845 270l26-7M868 266l14-7" />
        </g>
        <g fill="#1c1cae">
            {[[411, 218], [419, 286], [483, 279], [553, 265], [810, 181], [316, 327], [342, 542], [501, 343], [664, 422], [878, 261]].map(([x, y]) => (
                <rect key={`${x}-${y}`} x={x - 1.5} y={y - 1.5} width="3.500" height="3.500" rx="1" />
            ))}
        </g>
        <circle cx="417" cy="217.500" r="1.700" fill="#35558a" />
        <circle cx="804" cy="181.500" r="1.700" fill="#35558a" />
        <circle cx="537" cy="391" r="1.500" fill="none" stroke="#125" />

        <g className='font-["Open_Sans",sans-serif] text-[7px]' textAnchor="middle">
            <text transform="translate(608 198) rotate(-4)" fill="#5a9fd0">100.00</text>
            <text transform="translate(453 281) rotate(-5)" fill="#222">15.00</text>
            <text transform="translate(620 257) rotate(-5)" fill="#222">35.00</text>
            <text transform="translate(569 366) rotate(17)" fill="#0d2a55">Ø5.00</text>
            <text transform="translate(682 448) rotate(55)" fill="#1a1a1a">Ø15.00</text>
            <text transform="translate(330 430) rotate(83)" fill="#b02fc0">50.00</text>
            <text transform="translate(518 321) rotate(-38)" fill="#6f87a3">Ø5.00</text>
        </g>
    </svg>
);

// red leader lines lie over the menu as well
const Leaders = () => (
    <svg viewBox="142 98 832 484" preserveAspectRatio="xMinYMin meet" className="pointer-events-none absolute inset-0 h-full w-full">
        <g fill="none" stroke="#c93a3a" strokeWidth="0.900">
            <path d="M380 171L553 204" markerEnd="url(#red)" />
            <path d="M375 244L645 308" markerEnd="url(#red)" />
            <path d="M381 356L497 370" markerEnd="url(#red)" />
            <path d="M732 155L688 196" markerEnd="url(#red)" />
        </g>
    </svg>
);

const Callout = ({ children, className }: { children: string; className: string }) => (
    <p className={`absolute whitespace-nowrap font-["Roboto_Condensed","Roboto",sans-serif] text-[14px] leading-[18px] text-[#3a1206] [text-shadow:2px_0_#f58712,-2px_0_#f58712,0_2px_#f58712,0_-2px_#f58712,2px_2px_#f58712,-2px_2px_#f58712,2px_-2px_#f58712,-2px_-2px_#f58712,3px_0_#f58712,-3px_0_#f58712,0_3px_#f58712,0_-3px_#f58712,3px_2px_#f58712,-3px_2px_#f58712,3px_-2px_#f58712,-3px_-2px_#f58712,2px_3px_#f58712,-2px_3px_#f58712,1px_3px_3px_#555] ${className}`}>
        {children}
    </p>
);

const MenuItem = ({ label, icon, more, checked, marked }: { label: string; icon?: string; more?: boolean; checked?: boolean; marked?: boolean }) => (
    <li className="relative flex flex-1">
        {marked && (
            <svg viewBox="0 0 163 14" preserveAspectRatio="none" className="absolute left-px -top-px h-[14px] w-[163px]" aria-hidden="true">
                <rect x="1" y="1" width="161" height="12" rx="4" fill="#fff" stroke="#c4181f" strokeWidth="1.800" strokeDasharray="6 2" />
            </svg>
        )}
        <button className="relative flex flex-1 items-center whitespace-nowrap">
            <span className="flex w-[18px] justify-center self-stretch items-center">
                {icon && <Icon name={icon} className="size-[9px]" />}
                {checked && <svg viewBox="0 0 12 12" className="mr-[5px] size-[11px] border border-[#999] bg-[#cfcfcf]"><path d="M3 6l2 2 4-5" fill="none" stroke="#222" strokeWidth="1.300" /></svg>}
            </span>
            {label}
            {more && <svg viewBox="0 0 4 6" className="ml-auto mr-[7px] h-[4px] w-[3px]"><path d="M0 0l4 3-4 3z" /></svg>}
        </button>
    </li>
);

const ContextMenu = () => (
    <div className="absolute left-[488px] top-[98px] w-[169px] rounded-[4px] border-2 border-[#c4181f] bg-[#f4f4f4] shadow-[1px_2px_3px_#0008]">
        <ul className="flex h-[25px] flex-col">
            <MenuItem label="Инструменты выбора" more />
            <MenuItem label="Масштабирование/перемещение/вращение" more />
        </ul>
        <h4 className="h-3 border-t border-[#bbb] pl-[2px] font-bold leading-[11px]">Размер (D2@Эскиз1(100))</h4>
        <ul className="flex h-[103px] flex-col">
            <MenuItem label="Скрыть линию размера" />
            <MenuItem label="Связать значения" />
            <MenuItem label="Реверс направления" />
            <MenuItem label="Управляемый" />
            <MenuItem label="Отметить для чертежа" checked />
            <MenuItem label="Конфигурация размера" icon="pencil" marked />
            <MenuItem label="Параметры отображения" more />
            <MenuItem label="Автоматическое указание размеров" icon="dimension" />
            <MenuItem label="Примечания" more />
        </ul>
        <h4 className="h-3 border-t border-[#bbb] pl-[2px] font-bold leading-[11px]">Выбранные объекты</h4>
        <ul className="flex h-[23px] flex-col">
            <MenuItem label="Скрыть" icon="hide" />
            <MenuItem label="Выбрать вид примечания (*Спереди)" icon="note" />
        </ul>
        <div className="ml-[18px] mr-[2px] flex h-[11px] items-center justify-center border-t border-[#bbb] pr-[5px]">
            <svg viewBox="0 0 6 8" className="h-[5px] w-[4px]"><path d="M1 1l2 2 2-2M1 4l2 2 2-2" fill="none" stroke="#222" strokeWidth="1.200" /></svg>
        </div>
        {/* mouse pointer resting on the marked row */}
        <svg viewBox="0 0 8 12" className="absolute left-[36px] top-[100px] h-[11px] w-[7px]" aria-hidden="true"><path d="M1 1v9l2-2 2 3 1-1-1-3h2z" fill="#fff" stroke="#333" strokeWidth="0.800" /></svg>
    </div>
);

const HeadsUp = () => (
    <div className="relative flex h-6 items-center pl-[380px] *:shrink-0">
        {['zoomfit', 'zoomarea', 'section', 'tube', 'tubeback', 'bolt'].map((n) => (
            <button key={n} aria-label={n} className="flex w-[22px] justify-center"><Icon name={n} className="size-[17px]" /></button>
        ))}
        {['views', 'cube', 'eye'].map((n) => (
            <div key={n} className="flex w-[31px] items-center">
                <button aria-label={n} className="flex w-[22px] justify-center"><Icon name={n} className="size-[17px]" /></button>
                <span className="flex flex-1 justify-center"><Caret color="#999" /></span>
            </div>
        ))}
        <button aria-label="ball" className="flex w-[22px] justify-center"><Icon name="ball" /></button>
        {['scene', 'monitor'].map((n) => (
            <div key={n} className="flex w-[31px] items-center">
                <button aria-label={n} className="flex w-[22px] justify-center"><Icon name={n} className="size-[17px]" /></button>
                <span className="flex flex-1 justify-center"><Caret color="#999" /></span>
            </div>
        ))}
    </div>
);

const Viewport = () => (
    <main className="relative col-start-2 row-span-2 row-start-1 bg-[radial-gradient(ellipse_50%_75%_at_100%_25%,#d5dbea_0%,#d5dbea00_100%),linear-gradient(to_bottom,#fff_0%,#fff_22%,#e4e7f0_56%,#fff_82%)]">
        <Model />
        <HeadsUp />
        <button aria-label="collapse panel" className="absolute left-0 top-[260px] flex h-[18px] w-[4px] items-center justify-center border border-l-0 border-[#aaa] bg-[#f5f5f5]">
            <span className="size-[2px] rounded-full bg-[#999]" />
        </button>
        <ContextMenu />
        <Leaders />
        <Callout className="left-[62px] top-[63px]">2. ПКМ щёлкаем по размеру</Callout>
        <Callout className="-left-[12px] top-[135px]">3. ЛКМ выбираем Конфигурация размера</Callout>
        <Callout className="left-[22px] top-[248px]">1. ЛКМ щёлкаем по грани элемента</Callout>
        <Callout className="left-[597px] top-[43px]">Диалоговое окно</Callout>
    </main>
);

const App: React.FC = () => {
    return (
        <div className='flex h-screen flex-col overflow-hidden bg-[#f5f5f5] font-["Lato","Roboto",sans-serif] text-[6px] leading-[8px] text-[#1e1e1e]'>
            <div className="h-1 shrink-0 border-t border-[#9fb0bb] bg-[#dcdee2]" />
            <TopBar />
            <Ribbon />
            <div className="grid min-h-0 flex-1 grid-cols-[142px_1fr] grid-rows-[11px_1fr]">
                <RibbonTabs />
                <aside className="row-start-2 flex min-h-0 border-r border-[#b5b5b5]">
                    <SketchBar />
                    <PropertyPanel />
                </aside>
                <Viewport />
            </div>
        </div>
    );
};

export default App;
